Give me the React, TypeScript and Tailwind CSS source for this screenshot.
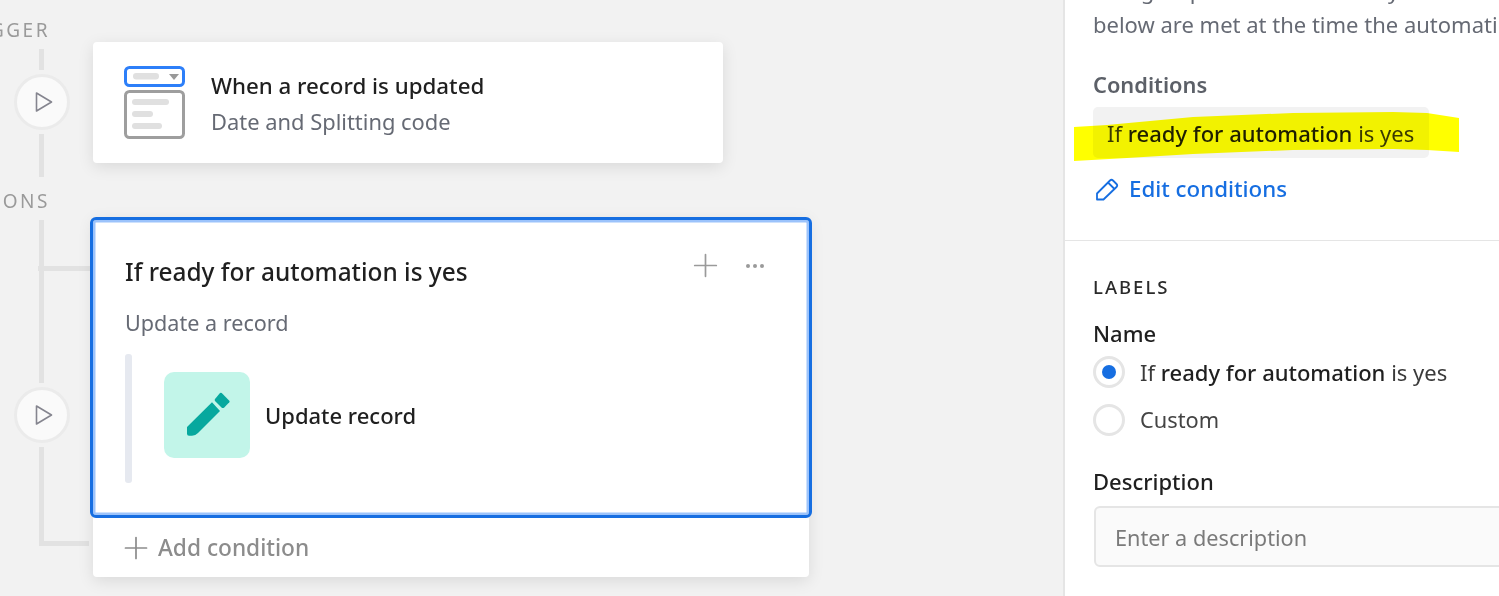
import React from 'react';
import { Plus } from 'lucide-react';

const font = "font-['Noto_Sans','Open_Sans',sans-serif]";

const RailLine = ({ h }: { h: string }) => <div className={`${h} w-[5px] ml-[39px] bg-[#e2e2e2]`} />;

const RunCircle = ({ className }: { className: string }) => (
  <div className={`w-[56px] h-[56px] ml-[14px] rounded-full border-[3px] border-[#ebebeb] bg-[#fafafa] flex items-center justify-center ${className}`}>
    <svg width="20" height="22" viewBox="0 0 20 22" fill="none" className="ml-[4px]">
      <path d="M2.5 2 L17.5 11 L2.5 20 Z" stroke="#85858f" strokeWidth="1.6" strokeLinejoin="round" />
    </svg>
  </div>
);

const RailLabel = ({ text, className }: { text: string; className: string }) => (
  <div className={`w-[50px] flex justify-end whitespace-nowrap text-[19px] leading-[20px] tracking-[2.5px] text-[#9a9a9a] ${className}`}>
    {text}
  </div>
);

const TriggerIcon = () => (
  <svg width="64" height="76" viewBox="0 0 64 76" fill="none" className="shrink-0">
    <rect x="2.5" y="2.5" width="58" height="18" rx="4" stroke="#2d7ff9" strokeWidth="3" />
    <rect x="10" y="8" width="26" height="6.5" rx="3.2" fill="#e0e0e0" />
    <path d="M46 9 H56 L51 15 Z" fill="#999999" />
    <rect x="2.5" y="26.5" width="58" height="46" rx="4" stroke="#9e9e9e" strokeWidth="3" />
    <rect x="9" y="34" width="37" height="6" rx="3" fill="#e0e0e0" />
    <rect x="9" y="46" width="21" height="6" rx="3" fill="#e0e0e0" />
    <rect x="9" y="58" width="30" height="6" rx="3" fill="#e0e0e0" />
  </svg>
);

const RecordPencil = () => (
  <svg width="86" height="86" viewBox="0 0 86 86" fill="#07a89e">
    <path d="M57.7 21 L65.3 28.7 Q66 29.5 65.3 30.3 L60 35.7 Q58.7 36.5 57.5 35.5 L51 29 Q50.3 28 51 27 L56 21 Q57 20.3 57.7 21 Z" />
    <path d="M48 30.3 L56 39 L34 61 Q31.5 63.7 28 63.7 L25 63.7 Q23 63.7 23 61.7 L23 55 Z" />
  </svg>
);

const EditPencil = () => (
  <svg width="24" height="24" viewBox="0 0 24 24" fill="none" stroke="#166ee1" strokeWidth="1.8" strokeLinejoin="round" className="shrink-0 ml-[2px]">
    <path d="M2 22.5 V16.5 L15 3.5 Q16.5 2 18 3.5 L21.5 7 Q23 8.5 21.5 10 L8.5 22.5 Z" />
    <path d="M13 5.5 L19.5 12" />
  </svg>
);

export default function App() {
  return (
    <div className={`w-[1499px] h-[596px] overflow-hidden flex ${font} text-[#1f1f1f]`}>
      <div className="w-[1063px] shrink-0 bg-[#f2f2f2] flex overflow-hidden">
        {/* connector rail */}
        <div className="w-[93px] shrink-0 flex flex-col">
          <RailLabel text="TRIGGER" className="mt-[20px] mb-[9px]" />
          <RailLine h="h-[21px]" />
          <RunCircle className="mt-[4px] mb-[4px]" />
          <RailLine h="h-[43px]" />
          <RailLabel text="CONDITIONS" className="mt-[14px] mb-[9px]" />
          <RailLine h="h-[46px]" />
          <div className="h-[5px] w-[52px] ml-[38px] bg-[#e2e2e2]" />
          <RailLine h="h-[112px]" />
          <RunCircle className="mt-[4px] mb-[4px]" />
          <div className="h-[99px] w-[50px] ml-[39px] border-l-[5px] border-b-[5px] border-[#e2e2e2]" />
        </div>

        <div className="flex flex-col pt-[42px]">
          <div className="w-[630px] h-[121px] bg-white rounded-[4px] shadow-[0_4px_16px_rgba(0,0,0,0.1)] flex items-center pl-[30px]">
            <TriggerIcon />
            <div className="ml-[24px] pt-[3px]">
              <div className="text-[22.3px] leading-[30px] font-medium">When a record is updated</div>
              <div className="text-[21.9px] leading-[30px] mt-[6px] text-[#666a74]">Date and Splitting code</div>
            </div>
          </div>

          <div className="w-[716px] mt-[54px] h-[360px] bg-white rounded-[4px] shadow-[0_4px_16px_rgba(0,0,0,0.1)] flex flex-col">
            <div className="-mx-[3px] h-[301px] shrink-0 rounded-[6px] border-[3px] border-[#166ee1] bg-white shadow-[inset_0_0_0_2.5px_#9cc3fb] pl-[32px] pr-[30px]">
              <div className="flex items-start justify-between pt-[32px]">
                <div className="text-[24.4px] leading-[40px] font-medium">If ready for automation is yes</div>
                <div className="flex items-center gap-[28px] pt-[1px] pr-[15px]">
                  <Plus size={37} strokeWidth={1.1} className="text-[#9a9a9a] -m-[6px]" />
                  <div className="flex gap-[3px]">
                    <div className="w-[4px] h-[4px] rounded-full bg-[#9a9a9a]" />
                    <div className="w-[4px] h-[4px] rounded-full bg-[#9a9a9a]" />
                    <div className="w-[4px] h-[4px] rounded-full bg-[#9a9a9a]" />
                  </div>
                </div>
              </div>
              <div className="text-[21.6px] leading-[30px] mt-[16px] text-[#666a74]">Update a record</div>
              <div className="flex mt-[16px]">
                <div className="w-[7px] h-[129px] rounded-[3px] bg-[#e6e9f0]" />
                <div className="flex items-center h-[86px] mt-[18px] ml-[32px]">
                  <div className="w-[86px] h-[86px] rounded-[10px] bg-[#c2f5e9]">
                    <RecordPencil />
                  </div>
                  <div className="ml-[15px] text-[22px] leading-[32px] font-medium">Update record</div>
                </div>
              </div>
            </div>
            <div className="flex items-center pl-[31px] h-[59px] text-[#8c8c8c]">
              <Plus size={36} strokeWidth={1.15} className="-m-[6px]" />
              <span className="ml-[10px] text-[22.7px] leading-[32px] font-medium">Add condition</span>
            </div>
          </div>
        </div>
      </div>

      {/* side panel */}
      <div className="relative flex-1 bg-white border-l-2 border-[#e5e5e5] overflow-hidden">
        <div className="pl-[28px] w-[600px]">
          <div className="-mt-[27px] text-[22px] leading-[34px] text-[#666a74] whitespace-nowrap">
            <div>This group of actions will only run if the conditions</div>
            <div>below are met at the time the automation runs</div>
          </div>
          <div className="mt-[29px] text-[21.8px] leading-[30px] font-semibold text-[#5c6068]">Conditions</div>
          <div className="mt-[7px] w-[336px] h-[51px] rounded-[5px] bg-[#f2f2f2] flex items-center pl-[14px] text-[22px] leading-[30px] text-[#3a3a3a]">
            <span>If <span className="font-medium text-[#1f1f1f]">ready for automation</span> is yes</span>
          </div>
          <div className="mt-[15px] flex items-center text-[#166ee1] text-[22.3px] leading-[32px] font-medium">
            <EditPencil />
            <span className="ml-[10px]">Edit conditions</span>
          </div>
        </div>
        <div className="mt-[35px] h-[1px] bg-[#e5e5e5]" />
        <div className="pl-[28px] w-[600px]">
          <div className="mt-[34px] text-[18.5px] leading-[24px] tracking-[2px] font-medium text-[#2a2a2a]">LABELS</div>
          <div className="mt-[19px] text-[22px] leading-[30px] font-medium">Name</div>
          <div className="mt-[8px] flex items-center">
            <div className="w-[32px] h-[32px] rounded-full border-[3px] border-[#e5e5e5] flex items-center justify-center">
              <div className="w-[14px] h-[14px] rounded-full bg-[#166ee1]" />
            </div>
            <span className="ml-[15px] text-[22px] leading-[30px] text-[#3a3a3a]">If <span className="font-medium text-[#1f1f1f]">ready for automation</span> is yes</span>
          </div>
          <div className="mt-[16px] flex items-center">
            <div className="w-[32px] h-[32px] rounded-full border-[3px] border-[#e5e5e5]" />
            <span className="ml-[15px] text-[21.8px] leading-[30px] text-[#444]">Custom</span>
          </div>
          <div className="mt-[30px] text-[22px] leading-[30px] font-medium">Description</div>
          <input
            readOnly
            placeholder="Enter a description"
            className="mt-[10px] ml-[1px] w-[500px] h-[61px] rounded-[6px] border-2 border-[#e5e5e5] bg-[#fafafa] pl-[19px] pt-[1px] text-[21.7px] placeholder:text-[#7a7a7a] outline-none"
          />
        </div>
        {/* highlighter scribble */}
        <svg className="absolute left-0 top-0 mix-blend-multiply pointer-events-none" width="435" height="170" viewBox="1065 0 435 170">
          <path
            d="M1074 127 L1107 125 L1193 117 L1293 113 L1393 112 L1427 113 L1459 118 L1459 152 L1427 150 L1393 149 L1293 150 L1193 154 L1127 158 L1074 161 Z"
            fill="#ffff00"
          />
        </svg>
      </div>
    </div>
  );
}
